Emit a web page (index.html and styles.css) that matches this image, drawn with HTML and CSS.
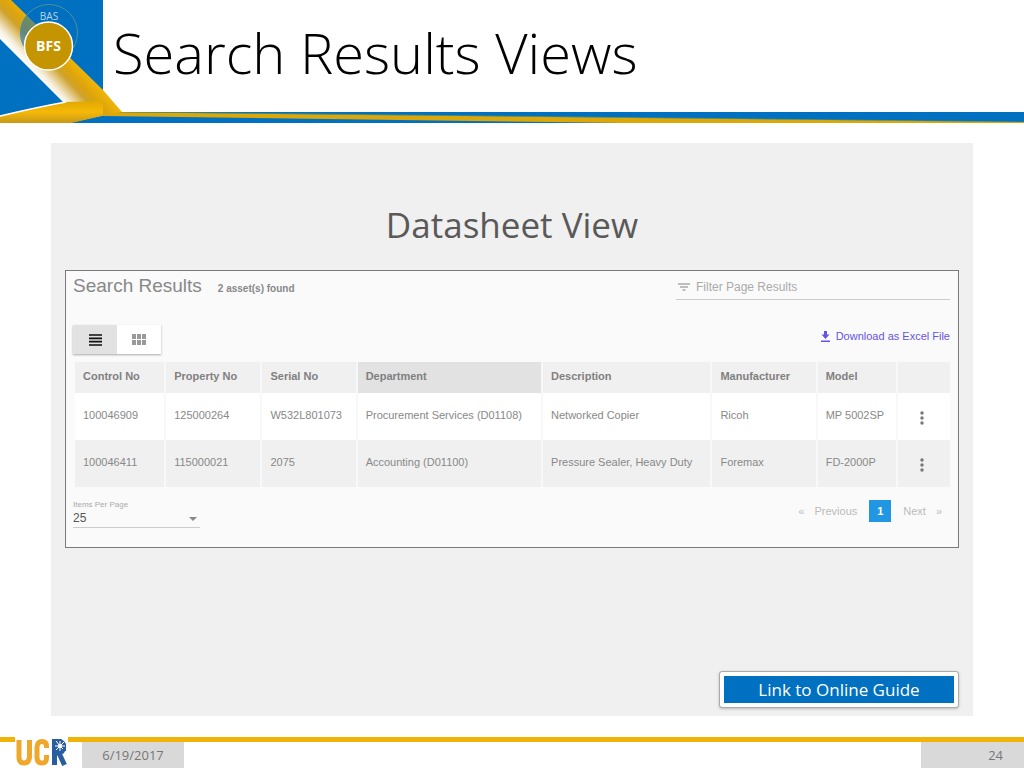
FILE: index.html
```html
<!DOCTYPE html>
<html lang="en">
<head>
<meta charset="utf-8">
<title>Search Results Views</title>
<link rel="stylesheet" href="styles.css">
</head>
<body>
<div class="slide">
  <header class="header">
    <svg class="corner" viewBox="0 0 103 123" aria-label="BAS BFS" role="img">
      <defs>
        <linearGradient id="band" gradientUnits="userSpaceOnUse" x1="31" y1="70" x2="60" y2="43">
          <stop offset="0" stop-color="#ffffff"/>
          <stop offset="0.15" stop-color="#f6eedc"/>
          <stop offset="0.5" stop-color="#cfa22c"/>
          <stop offset="0.68" stop-color="#dca40c"/>
          <stop offset="1" stop-color="#f2b705"/>
        </linearGradient>
        <linearGradient id="base" x1="0" y1="0" x2="0" y2="1">
          <stop offset="0" stop-color="#e0a800"/>
          <stop offset="0.5" stop-color="#f6b908"/>
          <stop offset="1" stop-color="#c89818"/>
        </linearGradient>
      </defs>
      <rect width="103" height="123" fill="#0070c0"/>
      <path d="M0 0H11L103 90L122 112L103 116L64 102L0 38Z" fill="url(#band)"/>
      <path d="M0 38L64 102" stroke="#fff" stroke-width="1.500"/>
      <path d="M0 116Q38 107 64 102L103 101V116L72 123H0Z" fill="url(#base)"/>
      <path d="M72 123L103 116V123Z" fill="#0070c0"/>
      <path d="M0 116Q38 107 66 102" fill="none" stroke="#fff" stroke-width="1.500"/>
      <circle cx="49" cy="33" r="28.500" fill="#0070c0" fill-opacity=".52" stroke="#4b91a0" stroke-width="1"/>
      <text x="49" y="20" class="bas">BAS</text>
      <circle cx="48.500" cy="46" r="24" fill="#c49500" stroke="#fff" stroke-width="1.500"/>
      <text x="48.500" y="51" class="bfs">BFS</text>
    </svg>
    <h1 class="title">Search Results Views</h1>
    <svg class="stripe" viewBox="0 0 921 11" preserveAspectRatio="none" aria-hidden="true">
      <rect width="921" height="11" fill="#0070c0"/>
      <path d="M0 0L921 10V11H520L0 4Z" fill="#dca808"/>
      <path d="M0 0H30L921 10" fill="none" stroke="#8a9c40" stroke-width=".5"/>
    </svg>
  </header>

  <main class="panel">
    <h2 class="subtitle">Datasheet View</h2>
    <section class="results">
      <div class="top">
        <h3 class="name">Search Results</h3>
        <span class="count">2 asset(s) found</span>
        <label class="filter">
          <svg width="12" height="8" viewBox="0 0 12 8" aria-hidden="true"><path d="M0 1H12M2 4H10M4.500 7H7.500" stroke="#aaa" stroke-width="1.300"/></svg>
          <input type="text" placeholder="Filter Page Results" aria-label="Filter Page Results">
        </label>
      </div>
      <div class="tools">
        <div class="views">
          <button class="view on" aria-label="List view"><svg width="13" height="12" viewBox="0 0 13 12"><path d="M0 1H13M0 4.300H13M0 7.600H13M0 11H13" stroke="#111" stroke-width="1.700"/></svg></button>
          <button class="view" aria-label="Grid view"><svg width="14" height="11" viewBox="0 0 14 11"><path d="M0 0h4v5H0zM5 0h4v5H5zM10 0h4v5h-4zM0 6h4v5H0zM5 6h4v5H5zM10 6h4v5h-4z" fill="#999"/></svg></button>
        </div>
        <a class="download" href="#"><svg width="9" height="11" viewBox="0 0 9 11" aria-hidden="true"><path d="M3 0h3v3.500h2.500L4.500 8L.500 3.500H3zM0 9.500h9V11H0z" fill="#6654e2"/></svg>Download as Excel File</a>
      </div>
      <table class="grid">
        <colgroup><col class="c1"><col class="c2"><col class="c3"><col class="c4"><col class="c5"><col class="c6"><col class="c7"><col class="c8"></colgroup>
        <thead>
          <tr><th>Control No</th><th>Property No</th><th>Serial No</th><th class="sorted">Department</th><th>Description</th><th>Manufacturer</th><th>Model</th><th></th></tr>
        </thead>
        <tbody>
          <tr><td>100046909</td><td>125000264</td><td>W532L801073</td><td>Procurement Services (D01108)</td><td>Networked Copier</td><td>Ricoh</td><td>MP 5002SP</td>
            <td><button class="more" aria-label="Actions"><svg width="4" height="14" viewBox="0 0 4 14"><circle cx="2" cy="2" r="1.700"/><circle cx="2" cy="7" r="1.700"/><circle cx="2" cy="12" r="1.700"/></svg></button></td></tr>
          <tr><td>100046411</td><td>115000021</td><td>2075</td><td>Accounting (D01100)</td><td>Pressure Sealer, Heavy Duty</td><td>Foremax</td><td>FD-2000P</td>
            <td><button class="more" aria-label="Actions"><svg width="4" height="14" viewBox="0 0 4 14"><circle cx="2" cy="2" r="1.700"/><circle cx="2" cy="7" r="1.700"/><circle cx="2" cy="12" r="1.700"/></svg></button></td></tr>
        </tbody>
      </table>
      <div class="bottom">
        <div class="perpage">
          <label for="per">Items Per Page</label>
          <div class="pick">
            <select id="per"><option>25</option></select>
            <svg width="8" height="4" viewBox="0 0 8 4" aria-hidden="true"><path d="M0 0h8L4 4z" fill="#888"/></svg>
          </div>
        </div>
        <nav class="pages">
          <a href="#">«</a><a href="#">Previous</a><a href="#" class="current">1</a><a href="#">Next</a><a href="#">»</a>
        </nav>
      </div>
    </section>
    <a class="guide" href="#">Link to Online Guide</a>
  </main>

  <footer class="footer">
    <div class="rule"></div>
    <svg class="logo" width="53" height="31" viewBox="0 0 53 31" role="img" aria-label="UCR">
      <g fill="none" stroke-width="5">
        <path d="M4 3V20Q4 26 9 26T14.500 20V3" stroke="#f0a82c"/>
        <path d="M31.500 11V9Q31.500 4.500 27 4.500T22 10V20Q22 26 27 26T31.500 20V18" stroke="#f0a82c"/>
        <path d="M39.500 28V4.500H43Q48.500 4.500 48.500 10T43 16H40M44 16L49.500 28" stroke="#2a5ca0"/>
      </g>
      <path d="M37 2h9l5 5v7H41z" fill="#2a5ca0"/>
      <path d="M45 9L41 4M45 9V4M45 9L49 5M45 9H40M45 9H50M45 9L41 13M45 9V14M45 9L48 12" stroke="#fff" stroke-width="1"/>
      <circle cx="45" cy="9" r="2" fill="#fff"/>
    </svg>
    <div class="date">6/19/2017</div>
    <div class="number">24</div>
  </footer>
</div>
</body>
</html>
```
FILE: styles.css
```css
* { box-sizing: border-box; }
body { margin: 0; background: #fff; font-family: "Open Sans", "Noto Sans", sans-serif; }
h1, h2, h3 { margin: 0; font-weight: 400; }
a { text-decoration: none; }
button { border: 0; padding: 0; background: none; }
svg { display: block; }

.slide { min-height: 100vh; display: flex; flex-direction: column; }

.header { display: grid; grid-template-columns: 103px 1fr; grid-template-rows: 112px 11px; }
.corner { grid-row: 1 / 3; width: 103px; height: 123px; overflow: visible; z-index: 1; }
.bas, .bfs { text-anchor: middle; font-size: 10px; fill: #b9d6e4; }
.bfs { font-size: 14px; font-weight: 700; fill: #fff; }
.title { padding: 12px 10px; font-size: 56px; line-height: 80px; font-weight: 300; color: #000; white-space: nowrap; }
.stripe { width: 100%; height: 11px; }

.panel { flex: 1; display: flex; flex-direction: column; margin: 20px 51px 21px 51px; padding: 58px 14px 8px 14px; background: #f0f0f0; }
.subtitle { font-size: 35px; line-height: 48px; margin-bottom: 21px; text-align: center; color: #595959; }

.results { border: 1px solid #7b7b7b; background: #fafafa; padding: 3px 8px 19px 7px; font-family: "Liberation Sans", Arial, sans-serif; color: #888; }
.top { display: flex; align-items: flex-start; }
.name { font-size: 19px; line-height: 24px; }
.count { margin-left: 16px; font-size: 10px; line-height: 30px; font-weight: 700; }
.filter { margin-left: auto; width: 274px; height: 26px; display: flex; align-items: center; gap: 6px; padding-left: 2px; border-bottom: 1px solid #ccc; }
.filter input { flex: 1; min-width: 0; border: 0; padding: 0; background: none; font: 12px "Liberation Sans", Arial, sans-serif; color: #777; }
.filter input::placeholder { color: #aaa; opacity: 1; }

.tools { display: flex; justify-content: space-between; margin: 21px 0 8px; }
.views { display: flex; height: 29px; box-shadow: 0 1px 2px #aaa; }
.view { width: 44px; display: flex; align-items: center; justify-content: center; background: #fff; }
.view.on { background: #e2e2e2; }
.download { display: flex; align-items: center; gap: 6px; height: 22px; font-size: 11px; color: #6654e2; }

.grid { margin-left: 2px; width: calc(100% - 2px); table-layout: fixed; border-collapse: collapse; font-size: 11px; line-height: 14px; }
.grid th, .grid td { padding: 0 0 4px 8px; text-align: left; white-space: nowrap; border-left: 2px solid #f8f8f8; }
.grid th:first-child, .grid td:first-child { border-left: 0; }
.grid th { height: 31px; background: #f0f0f0; color: #808080; }
.grid th.sorted { background: #e2e2e2; }
.grid td { height: 47px; background: #fff; }
.grid tr:nth-child(2) td { background: #f0f0f0; }
.c1 { width: 90px; } .c2 { width: 96px; } .c3 { width: 95px; } .c4 { width: 185px; }
.c5 { width: 169px; } .c6 { width: 105px; } .c7 { width: 80px; } .c8 { width: 53px; }
.more { display: block; margin-left: 14px; padding-top: 6px; fill: #777; }

.bottom { display: flex; justify-content: space-between; align-items: flex-start; margin-top: 13px; }
.perpage { width: 127px; border-bottom: 1px solid #ccc; }
.perpage label { display: block; font-size: 8px; line-height: 10px; color: #aaa; }
.pick { display: flex; align-items: center; padding-right: 3px; }
.pick select { flex: 1; appearance: none; border: 0; padding: 0; background: none; font: 12px/17px "Liberation Sans", Arial, sans-serif; color: #555; }
.pages { display: flex; gap: 10px; padding-right: 8px; font-size: 11px; line-height: 22px; }
.pages a { color: #bbb; }
.pages .current { width: 22px; margin: 0 2px; background: #2196e3; color: #fff; font-weight: 700; text-align: center; }

.guide { align-self: flex-end; margin-top: auto; width: 240px; padding: 3px; border: 1px solid #aaa; border-radius: 3px; background: #0070c0 content-box; box-shadow: inset 0 0 0 4px #fff, 0 1px 3px #bbb; font-size: 17px; line-height: 29px; text-align: center; color: #fff; }

.footer { display: grid; grid-template-columns: 15px 53px 14px 102px 1fr 103px; grid-template-rows: 5px 26px; }
.rule { grid-area: 1 / 1 / 2 / 7; background: #efb406; }
.logo { grid-area: 1 / 2 / 3 / 3; background: #fff; }
.date, .number { grid-area: 2 / 4; background: #d9d9d9; font-size: 13px; line-height: 27px; text-align: center; color: #777; }
.number { grid-area: 2 / 6; text-align: right; padding-right: 21px; }
```
